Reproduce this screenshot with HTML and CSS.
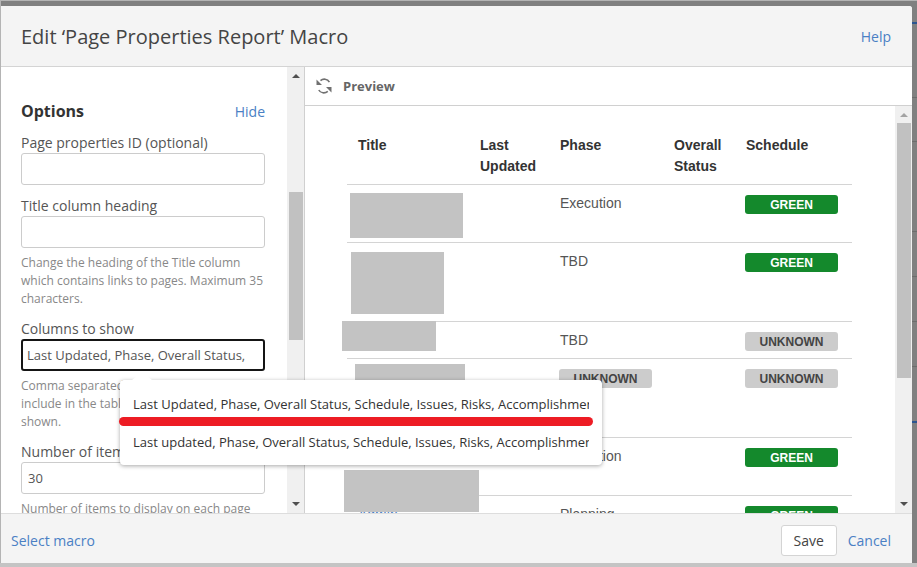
FILE: index.html
```html
<!DOCTYPE html>
<html lang="en">

<head>
  <meta charset="utf-8">
  <title>Edit 'Page Properties Report' Macro</title>
  <link rel="stylesheet" href="styles.css">
</head>

<body>
  <div class="dialog">
    <header class="dialog-header">
      <h1>Edit ‘Page Properties Report’ Macro</h1>
      <a href="#">Help</a>
    </header>

    <div class="dialog-body">
      <form class="options" id="macro-form">
        <div class="options-scroll">
          <div class="options-title">
            <h2>Options</h2>
            <a href="#">Hide</a>
          </div>

          <div class="field">
            <label for="prop-id">Page properties ID (optional)</label>
            <input type="text" id="prop-id">
          </div>
          <div class="field">
            <label for="title-heading">Title column heading</label>
            <input type="text" id="title-heading">
            <p>Change the heading of the Title column<br>which contains links to pages. Maximum 35<br>characters.</p>
          </div>
          <div class="field">
            <label for="columns">Columns to show</label>
            <input type="text" id="columns" class="focused" value="Last Updated, Phase, Overall Status,">
            <p>Comma separated<br>include in the table<br>shown.</p>
          </div>
          <div class="field">
            <label for="page-size">Number of items</label>
            <input type="text" id="page-size" value="30">
            <p>Number of items to display on each page</p>
          </div>
        </div>
        <div class="scrollbar options-bar">
          <span class="arrow up"></span>
          <span class="thumb"></span>
          <span class="arrow down"></span>
        </div>
      </form>

      <section class="preview">
        <div class="preview-header">
          <svg class="refresh" viewBox="0 0 16 16" width="16" height="16">
            <path d="M4.500 2.600C7 .400 11.500 .600 13.400 4.200M11.800 13.400C9 15.600 4.600 15.400 2.800 12" fill="none" stroke="#707070" stroke-width="1.600"/>
            <path d="M.5 1.500v5.500h5.500zM15.500 14.500V9H10z" fill="#707070"/>
          </svg>
          <h2>Preview</h2>
        </div>
        <div class="preview-frame">
          <div class="preview-content">
            <table>
              <thead>
                <tr>
                  <th class="col-title">Title</th>
                  <th class="col-updated">Last Updated</th>
                  <th class="col-phase">Phase</th>
                  <th class="col-status">Overall Status</th>
                  <th>Schedule</th>
                </tr>
              </thead>
              <tbody>
                <tr class="row-medium">
                  <td><span class="mask mask-1"></span></td>
                  <td></td>
                  <td>Execution</td>
                  <td></td>
                  <td><span class="lozenge green">GREEN</span></td>
                </tr>
                <tr class="row-tall">
                  <td><span class="mask mask-2"></span></td>
                  <td></td>
                  <td>TBD</td>
                  <td></td>
                  <td><span class="lozenge green">GREEN</span></td>
                </tr>
                <tr class="row-short">
                  <td><span class="mask mask-3"></span></td>
                  <td></td>
                  <td>TBD</td>
                  <td></td>
                  <td><span class="lozenge">UNKNOWN</span></td>
                </tr>
                <tr class="row-tall">
                  <td><span class="mask mask-4"></span></td>
                  <td></td>
                  <td><span class="lozenge">UNKNOWN</span></td>
                  <td></td>
                  <td><span class="lozenge">UNKNOWN</span></td>
                </tr>
                <tr class="row-medium">
                  <td><span class="mask mask-5"></span></td>
                  <td></td>
                  <td>Execution</td>
                  <td></td>
                  <td><span class="lozenge green">GREEN</span></td>
                </tr>
                <tr class="row-medium">
                  <td><a href="#">Admin</a></td>
                  <td></td>
                  <td>Planning</td>
                  <td></td>
                  <td><span class="lozenge green">GREEN</span></td>
                </tr>
              </tbody>
            </table>
          </div>
          <div class="scrollbar preview-bar">
            <span class="arrow up dim"></span>
            <span class="thumb"></span>
            <span class="arrow down"></span>
          </div>
        </div>
      </section>
    </div>

    <footer class="dialog-footer">
      <a href="#">Select macro</a>
      <div class="buttons">
        <button type="submit" form="macro-form">Save</button>
        <a href="#">Cancel</a>
      </div>
    </footer>

    <!-- autofill suggestions -->
    <div class="suggestions">
      <ul>
        <li>Last Updated, Phase, Overall Status, Schedule, Issues, Risks, Accomplishments</li>
        <li>Last updated, Phase, Overall Status, Schedule, Issues, Risks, Accomplishments</li>
      </ul>
      <span class="marker"></span>
    </div>
  </div>
</body>

</html>
```

FILE: styles.css
```css
* {
  margin: 0;
  padding: 0;
  box-sizing: border-box;
}

body {
  display: flex;
  height: 100vh;
  padding: 6px 5px 4px 1px;
  overflow: hidden;
  font-family: "Open Sans", "Noto Sans", sans-serif;
  font-size: 13px;
  color: #555;
  /* dimmed page behind the dialog */
  background:
    linear-gradient(to top, #c4c4c4 4px, transparent 4px),
    linear-gradient(to right, #b4b4b4 1px, transparent 1px),
    linear-gradient(#b4b4b4 1px, transparent 1px),
    linear-gradient(transparent 22px, #2c5590 22px 24px, transparent 24px 421px, #2c5590 421px 423px, transparent 423px),
    linear-gradient(transparent 97px, #6c6c6c 97px 98px, transparent 98px 141px, #6c6c6c 141px 142px, transparent 142px 231px, #6c6c6c 231px 232px, transparent 232px 276px, #6c6c6c 276px 277px, transparent 277px 321px, #6c6c6c 321px 322px, transparent 322px 366px, #6c6c6c 366px 367px, transparent 367px),
    #808080;
}

a {
  color: #4a80c4;
  text-decoration: none;
}

.dialog {
  position: relative;
  display: flex;
  flex-direction: column;
  flex: 1;
  min-width: 0;
  background: #fff;
  border-radius: 0 3px 0 0;
}

.dialog-header {
  display: flex;
  align-items: center;
  justify-content: space-between;
  height: 61px;
  padding: 0 21px 0 20px;
  background: #f4f4f4;
  border-bottom: 1px solid #d4d4d4;
  border-radius: 0 3px 0 0;
}

.dialog-header h1 {
  font-size: 20px;
  font-weight: normal;
  color: #444;
}

.dialog-header a,
.dialog-footer a,
.options-title a {
  font-size: 14px;
}

.dialog-body {
  display: flex;
  flex: 1;
  min-height: 0;
}

/* left side */
.options {
  display: flex;
  width: 304px;
  border-right: 1px solid #d0d0d0;
}

.options-scroll {
  flex: 1;
  padding: 33px 22px 0 20px;
  overflow: hidden;
}

.options-title {
  display: flex;
  align-items: center;
  justify-content: space-between;
  height: 22px;
}

.options-title h2 {
  font-size: 16px;
  color: #333;
}

.field {
  margin-top: 11px;
}

.field label {
  display: block;
  font-size: 14px;
  line-height: 20px;
  white-space: nowrap;
}

.field input {
  display: block;
  width: 100%;
  height: 32px;
  padding: 0 6px;
  border: 1px solid #ccc;
  border-radius: 3px;
  font: inherit;
  color: #555;
  background: #fff;
}

.field .focused {
  padding: 0 4px;
  border: 2px solid #151515;
}

.field p {
  padding-top: 6px;
  font-size: 12px;
  line-height: 18px;
  color: #888;
  white-space: nowrap;
}

.scrollbar {
  display: flex;
  flex-direction: column;
  align-items: center;
  flex-shrink: 0;
  width: 17px;
  padding: 7px 0;
  background: #f0f0f0;
}

.thumb {
  width: 14px;
  background: #c1c1c1;
}

.arrow {
  border: 4px solid transparent;
}

.up {
  border-top: none;
  border-bottom-color: #505050;
}

.down {
  margin-top: auto;
  border-bottom: none;
  border-top-color: #505050;
}

.dim {
  border-bottom-color: #a3a3a3;
}

.options-bar .thumb {
  height: 148px;
  margin-top: 114px;
}

.preview-bar .thumb {
  height: 65%;
  margin-top: 6px;
}

/* right side */
.preview {
  display: flex;
  flex-direction: column;
  flex: 1;
  min-width: 0;
}

.preview-header {
  display: flex;
  align-items: center;
  gap: 11px;
  height: 39px;
  padding-left: 11px;
  border-bottom: 1px solid #d0d0d0;
}

.preview-header h2 {
  font-size: 13px;
  color: #666;
}

.preview-frame {
  display: flex;
  flex: 1;
  min-height: 0;
}

.preview-content {
  flex: 1;
  padding: 21px 43px 0 42px;
  overflow: hidden;
  font-family: "Liberation Sans", Arial, sans-serif;
  font-size: 14px;
}

table {
  width: 100%;
  table-layout: fixed;
  border-collapse: collapse;
}

th,
td {
  padding: 8px 14px 0 11px;
  border-bottom: 1px solid #d4d4d4;
  line-height: 21px;
  text-align: left;
  vertical-align: top;
}

th {
  height: 57px;
  color: #333;
}

td {
  position: relative;
}

.col-title {
  width: 122px;
}

.col-updated {
  width: 80px;
}

.col-phase {
  width: 114px;
}

.col-status {
  width: 72px;
  padding-right: 0;
}

.row-short {
  height: 37px;
}

.row-medium {
  height: 58px;
}

.row-tall {
  height: 79px;
}

.lozenge {
  display: block;
  width: 93px;
  height: 19px;
  margin: 2px 0 0 -1px;
  border-radius: 3px;
  background: #ccc;
  color: #444;
  font-size: 12px;
  font-weight: bold;
  line-height: 20px;
  text-align: center;
}

.green {
  background: #14892c;
  color: #fff;
}

/* grey blocks that cover the page titles */
.mask {
  position: absolute;
  z-index: 1;
  background: #c3c3c3;
}

.mask-1 {
  top: 8px;
  left: 3px;
  width: 113px;
  height: 45px;
}

.mask-2 {
  top: 9px;
  left: 4px;
  width: 93px;
  height: 62px;
}

.mask-3 {
  top: -1px;
  left: -5px;
  width: 94px;
  height: 30px;
}

.mask-4 {
  top: 5px;
  left: 8px;
  width: 110px;
  height: 17px;
}

.mask-5 {
  top: 32px;
  left: -3px;
  width: 135px;
  height: 42px;
}

.dialog-footer {
  display: flex;
  align-items: center;
  justify-content: space-between;
  height: 50px;
  padding: 3px 21px 0 10px;
  background: #f4f4f4;
  border-top: 1px solid #ddd;
}

.buttons {
  display: flex;
  align-items: center;
  gap: 11px;
}

.buttons button {
  width: 56px;
  height: 31px;
  border: 1px solid #d4d4d4;
  border-radius: 3px;
  background: #fff;
  font: inherit;
  font-size: 14px;
  color: #444;
}

.suggestions {
  position: absolute;
  z-index: 2;
  top: 374px;
  left: 119px;
  width: 482px;
  padding: 5px 13px 4px;
  border-radius: 4px;
  background: #fff;
  box-shadow: 0 1px 4px rgba(0, 0, 0, 0.35);
}

.suggestions::before {
  content: "";
  position: absolute;
  top: -8px;
  left: 12px;
  border: 10px solid transparent;
  border-top: none;
  border-bottom: 8px solid #fff;
}

.suggestions li {
  overflow: hidden;
  list-style: none;
  line-height: 38px;
  white-space: nowrap;
  color: #333;
}

.marker {
  position: absolute;
  top: 37px;
  left: -1px;
  width: 474px;
  height: 9px;
  border-radius: 5px;
  background: #ed1c24;
}
```
